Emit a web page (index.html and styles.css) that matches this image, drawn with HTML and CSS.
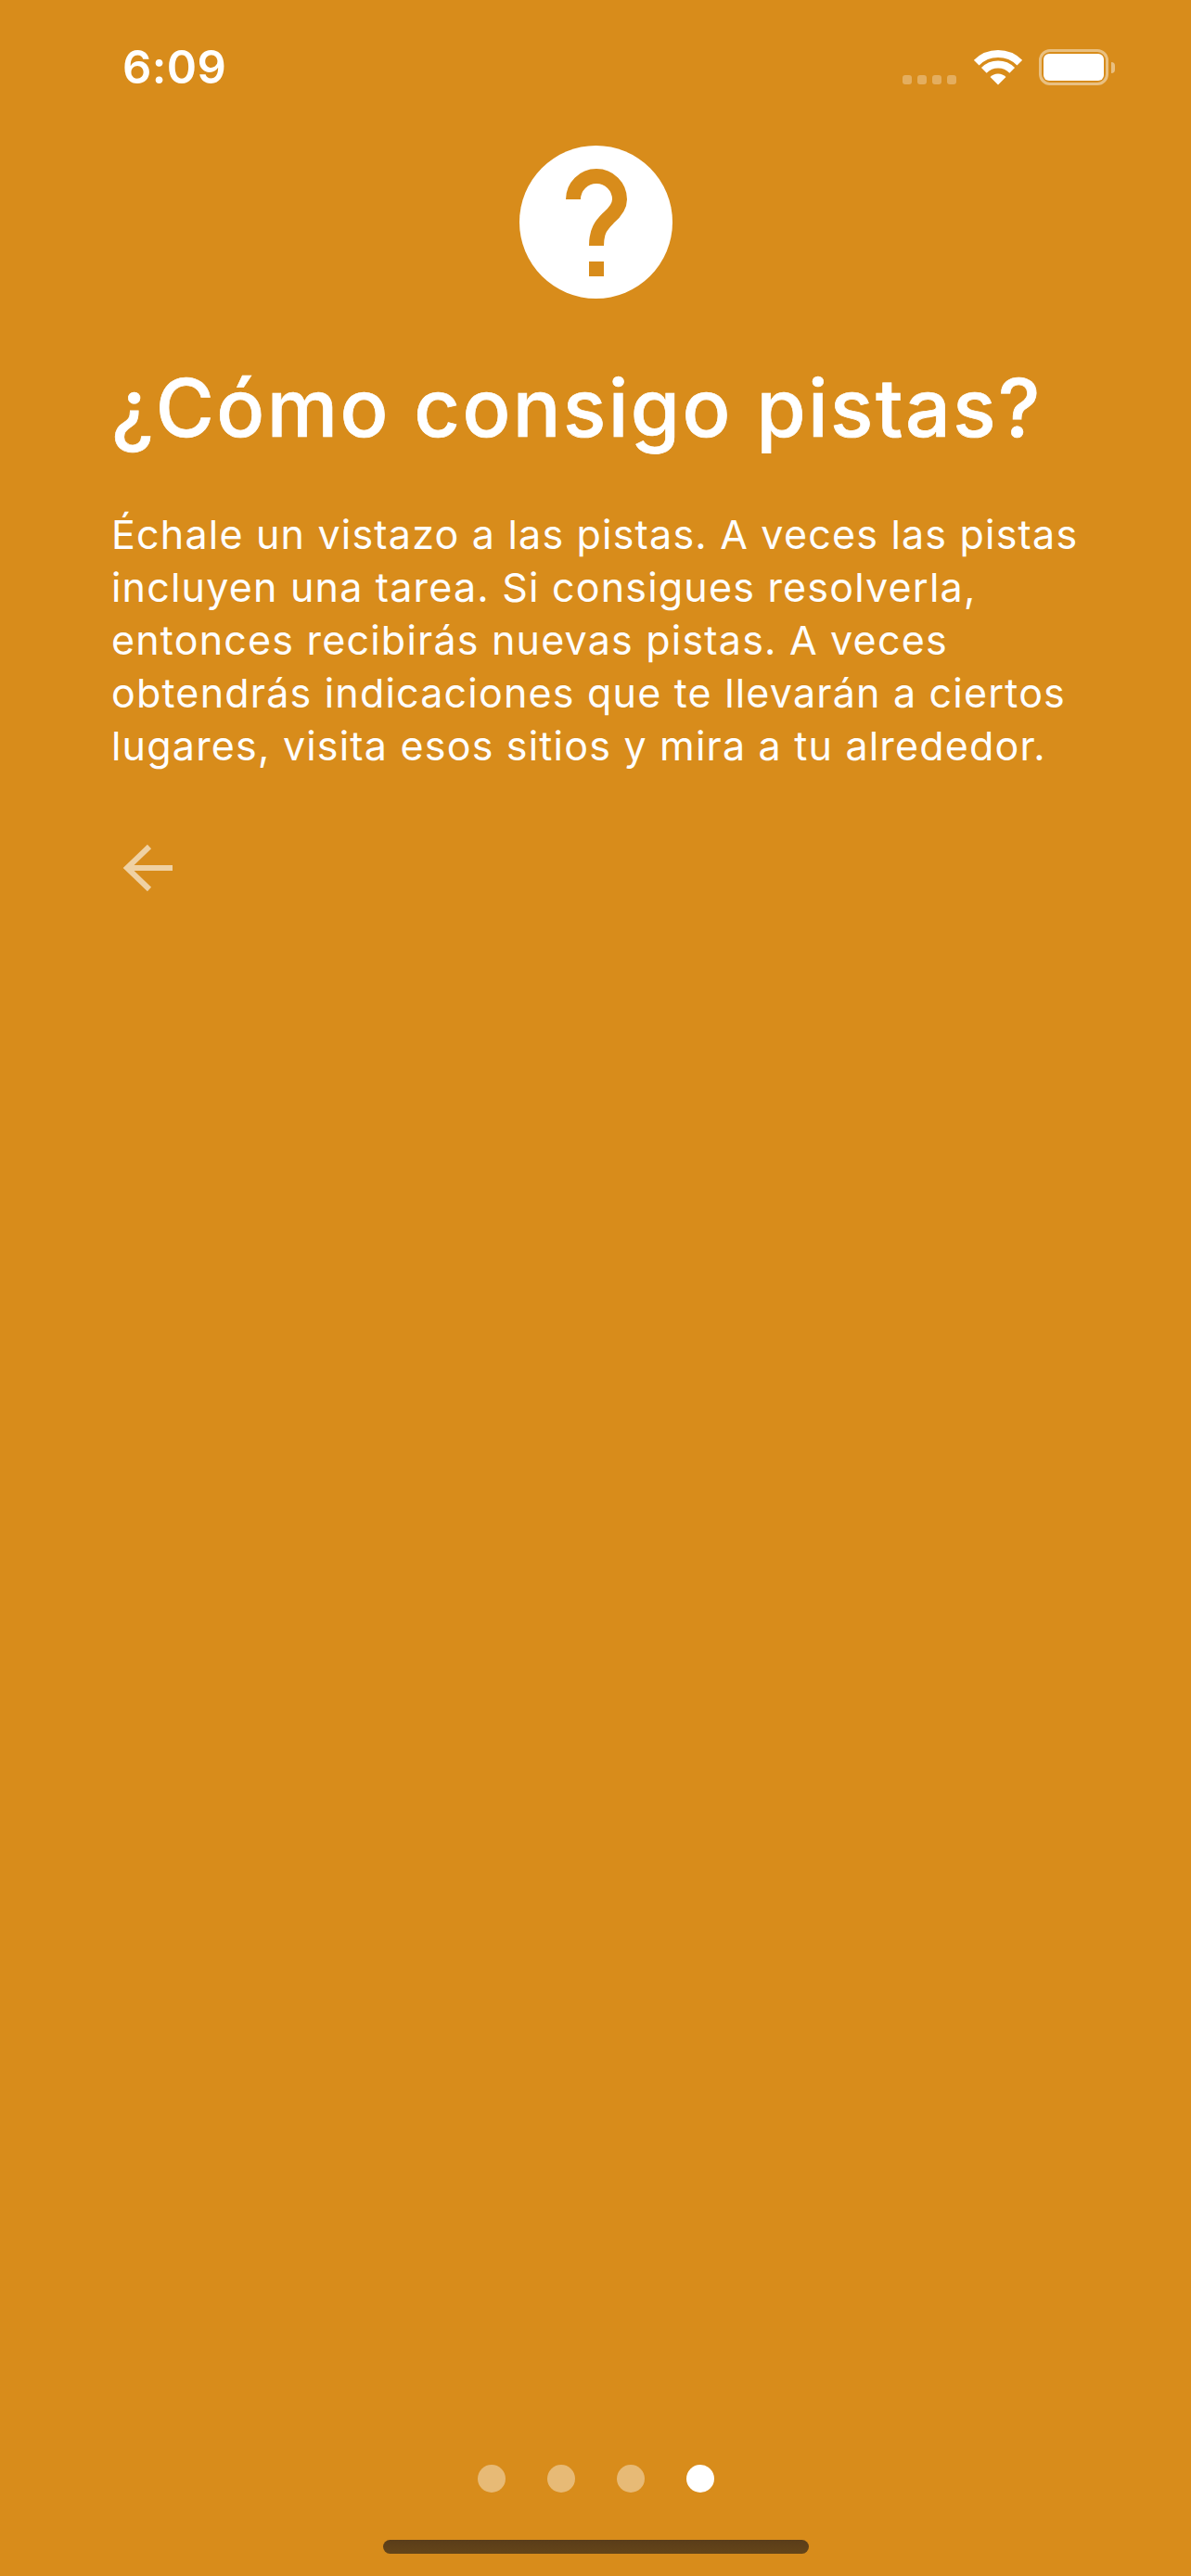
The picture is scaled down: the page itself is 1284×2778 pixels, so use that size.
FILE: index.html
```html
<!DOCTYPE html>
<html lang="es">
<head>
	<meta charset="UTF-8">
	<meta name="viewport" content="width=device-width, initial-scale=1.0">
	<title>¿Cómo consigo pistas?</title>
	<link rel="stylesheet" href="styles.css">
</head>
<body>
	<div class="screen">
		<div class="status">
			<span class="status__time">6:09</span>
			<div class="status__icons">
				<div class="signal">
					<i></i><i></i><i></i><i></i>
				</div>
				<svg class="wifi" viewBox="0 0 52 38" width="52" height="38">
					<path d="M2.7 13.7A33 33 0 0 1 49.3 13.7" />
					<path d="M10.8 21.8A21.5 21.5 0 0 1 41.2 21.8" />
					<path class="wifi__dot" d="M26 37.5L17.5 29A12 12 0 0 1 34.5 29Z" />
				</svg>
				<div class="battery">
					<div class="battery__body"><div class="battery__level"></div></div>
					<div class="battery__nub"></div>
				</div>
			</div>
		</div>

		<div class="content">
			<svg class="help" viewBox="0 0 165 165" width="165" height="165">
				<circle cx="82.5" cy="82.5" r="82.5" fill="#fff" />
				<path class="help__mark" d="M58 58A25 25 0 0 1 108 58C108 66 103 72 96 78C88 86 83 92 83 108" />
				<rect class="help__dot" x="75" y="125" width="16" height="16" />
			</svg>
			<h1 class="title">¿Cómo consigo pistas?</h1>
			<p class="text">Échale un vistazo a las pistas. A veces las pistas<br>incluyen una tarea. Si consigues resolverla,<br>entonces recibirás nuevas pistas. A veces<br>obtendrás indicaciones que te llevarán a ciertos<br>lugares, visita esos sitios y mira a tu alrededor.</p>
			<svg class="back" viewBox="0 0 54 54" width="54" height="54">
				<path d="M54 26H5M29 3L5 26L29 49" />
			</svg>
		</div>

		<div class="footer">
			<div class="dots">
				<span class="dots__item"></span>
				<span class="dots__item"></span>
				<span class="dots__item"></span>
				<span class="dots__item dots__item--active"></span>
			</div>
			<div class="home-bar"></div>
		</div>
	</div>
</body>
</html>
```
FILE: styles.css
```css
* {
	box-sizing: border-box;
}
body {
	margin: 0;
	background: #d88c1b;
	color: #fff;
	font-family: Inter, "Liberation Sans", sans-serif;
}
.screen {
	display: flex;
	flex-direction: column;
	height: 2778px;
	overflow: hidden;
}

.status {
	display: flex;
	justify-content: space-between;
	align-items: flex-start;
	height: 157px;
	padding: 44px 82px 0 132px;
}
.status__time {
	font-size: 49px;
	font-weight: 600;
	line-height: 58px;
	letter-spacing: .4px;
}
.status__icons {
	display: flex;
	align-items: flex-end;
	height: 39px;
	margin-top: 9px;
}
.signal {
	display: flex;
	gap: 6px;
	margin: 0 19px 1px 0;
}
.signal i {
	width: 10px;
	height: 10px;
	border-radius: 3px;
	background: rgba(255, 255, 255, .3);
}
.wifi {
	display: block;
	margin-right: 18px;
}
.wifi path {
	fill: none;
	stroke: #fff;
	stroke-width: 8;
}
.wifi .wifi__dot {
	fill: #fff;
	stroke: none;
}
.battery {
	display: flex;
	align-items: center;
	gap: 3px;
}
.battery__body {
	width: 75px;
	height: 39px;
	padding: 2px;
	border: 3.5px solid rgba(255, 255, 255, .45);
	border-radius: 12px;
}
.battery__level {
	height: 100%;
	border-radius: 6px;
	background: #fff;
}
.battery__nub {
	width: 4px;
	height: 12px;
	border-radius: 0 6px 6px 0;
	background: rgba(255, 255, 255, .45);
}

.content {
	display: flex;
	flex-direction: column;
	padding: 0 120px;
}
.help {
	display: block;
	align-self: center;
}
.help__mark {
	fill: none;
	stroke: #d88c1b;
	stroke-width: 16;
}
.help__dot {
	fill: #d88c1b;
}
.title {
	margin: 66px 0 0;
	font-size: 86px;
	font-weight: 500;
	line-height: 104px;
	letter-spacing: 2.45px;
	white-space: nowrap;
	-webkit-text-stroke: .7px #fff;
}
.text {
	margin: 56px 0 0;
	font-size: 43px;
	font-weight: 400;
	line-height: 57px;
	letter-spacing: 1.2px;
	white-space: nowrap;
}
.back {
	display: block;
	margin: 77px 0 0 12px;
}
.back path {
	fill: none;
	stroke: rgba(255, 255, 255, .6);
	stroke-width: 6;
}

.footer {
	display: flex;
	flex-direction: column;
	align-items: center;
	margin-top: auto;
	padding-bottom: 24px;
}
.dots {
	display: flex;
	gap: 45px;
	margin-bottom: 51px;
}
.dots__item {
	width: 30px;
	height: 30px;
	border-radius: 50%;
	background: rgba(255, 255, 255, .4);
}
.dots__item--active {
	background: #fff;
}
.home-bar {
	width: 459px;
	height: 15px;
	border-radius: 8px;
	background: linear-gradient(#5a3d19, #654519);
}
```
